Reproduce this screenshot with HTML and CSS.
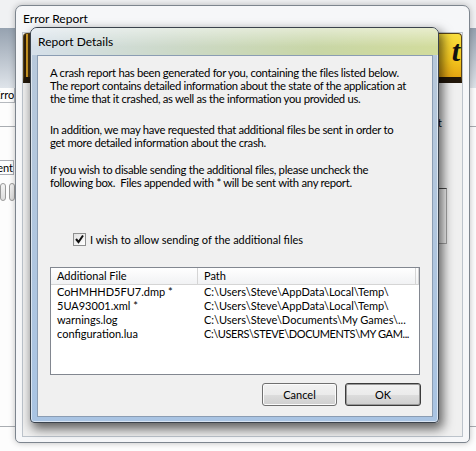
FILE: index.html
```html
<!DOCTYPE html>
<html lang="en">
<head>
  <meta charset="UTF-8" />
  <title>Report Details</title>
  <link rel="stylesheet" href="styles.css">
</head>
<body>
  <!-- window lying behind the error report -->
  <div class="back-win">
    <div class="back-top"></div>
    <div class="back-band"></div>
    <div class="back-field"><span>Error</span></div>
    <div class="back-rule"></div>
    <div class="back-input"><span>Comment</span></div>
    <div class="back-buttons"><span></span><span></span></div>
    <div class="back-rule low"></div>
  </div>

  <div class="win report-win">
    <div class="win-title">Error Report</div>
    <div class="er-client">
      <div class="banner"><span class="banner-logo">Report</span></div>
      <div class="er-label">Comment</div>
      <div class="er-box"></div>
    </div>
  </div>

  <div class="win dialog">
    <div class="dlg-title">Report Details</div>
    <div class="dlg-client">
      <p class="p1">A crash report has been generated for you, containing the files listed below.<br>
        The report contains detailed information about the state of the application at<br>
        the time that it crashed, as well as the information you provided us.</p>
      <p class="p2">In addition, we may have requested that additional files be sent in order to<br>
        get more detailed information about the crash.</p>
      <p class="p3">If you wish to disable sending the additional files, please uncheck the<br>
        following box.&nbsp; Files appended with * will be sent with any report.</p>

      <label class="check">
        <span class="check-box">
          <svg width="11" height="11" viewBox="0 0 11 11"><polyline points="2,5 4.5,8 9,1.5" fill="none" stroke="#111" stroke-width="2"/></svg>
        </span>
        I wish to allow sending of the additional files
      </label>

      <div class="listview">
        <div class="lv-head">
          <span class="c1">Additional File</span>
          <span class="c2">Path</span>
          <span class="c3"></span>
        </div>
        <div class="lv-row"><span class="c1">CoHMHHD5FU7.dmp *</span><span class="c2">C:\Users\Steve\AppData\Local\Temp\</span></div>
        <div class="lv-row"><span class="c1">5UA93001.xml *</span><span class="c2">C:\Users\Steve\AppData\Local\Temp\</span></div>
        <div class="lv-row"><span class="c1">warnings.log</span><span class="c2">C:\Users\Steve\Documents\My Games\...</span></div>
        <div class="lv-row"><span class="c1">configuration.lua</span><span class="c2 caps">C:\USERS\STEVE\DOCUMENTS\MY GAM...</span></div>
      </div>

      <div class="buttons">
        <button class="btn">Cancel</button>
        <button class="btn default">OK</button>
      </div>
    </div>
  </div>
</body>
</html>
```

FILE: styles.css
```css
* {
  box-sizing: border-box;
  margin: 0;
  padding: 0;
}

body {
  width: 476px;
  height: 451px;
  overflow: hidden;
  position: relative;
  background: #f1f2f4;
  font-family: 'Segoe UI', Lato, sans-serif;
  font-size: 11.5px;
  color: #000;
}

/* ---- back window ---- */
.back-win {
  height: 451px;
  display: flex;
  flex-direction: column;
  background: #fdfdfd;
}

.back-top {
  height: 28px;
  background: #f0f1f3;
}

.back-band {
  height: 60px;
  background: linear-gradient(#96a2b0, #dfe4ea);
}

.back-field {
  height: 15px;
  width: 15px;
  overflow: hidden;
  border-bottom: 1px solid #b5b9be;
  border-right: 1px solid #b5b9be;
  line-height: 14px;
  font-size: 11px;
}

.back-field span {
  margin-left: -6px;
}

.back-rule {
  height: 1px;
  margin-top: 23px;
  background: #a9adb2;
}

.back-input {
  width: 14px;
  height: 15px;
  margin-top: 33px;
  overflow: hidden;
  display: flex;
  justify-content: flex-end;
  border: 1px solid #abadb3;
  border-left: 0;
  line-height: 13px;
  font-size: 11px;
}

.back-buttons {
  display: flex;
  gap: 3px;
  margin-top: 8px;
}

.back-buttons span {
  width: 6px;
  height: 18px;
  border: 1px solid #9a9a9a;
  border-radius: 3px;
  background: linear-gradient(#f4f4f4, #dcdcdc);
}

.back-rule.low {
  margin-top: 225px;
}

/* ---- shared window frame ---- */
.win {
  position: absolute;
  display: flex;
  flex-direction: column;
}

.report-win {
  left: 15px;
  top: 5px;
  width: 455px;
  height: 438px;
  border: 1px solid #7d858e;
  border-radius: 7px 7px 5px 5px;
  background: #f6f7f9;
  box-shadow: 0 0 6px rgba(0, 0, 0, 0.25);
}

.win-title {
  height: 26px;
  padding-left: 7px;
  line-height: 26px;
  font-size: 12px;
}

.er-client {
  flex: 1;
  margin: 0 6px 5px;
  border: 1px solid #bcc3cb;
  background: #f0f0f0;
  display: flex;
  flex-direction: column;
}

.banner {
  height: 50px;
  display: flex;
  align-items: flex-start;
  justify-content: flex-end;
  padding: 5px 1px 0 0;
  border: 1px solid #5a4418;
  border-bottom: 6px solid #22170a;
  border-radius: 4px 4px 0 0;
  background:
    linear-gradient(90deg, #2f1f0b 0 2px, #d8a127 2px 4px, #4a3312 4px 7px, transparent 7px),
    linear-gradient(#f9de3e, #f3c61e 60%, #e4a512);
}

.banner-logo {
  font-family: 'Liberation Serif', serif;
  font-style: italic;
  font-weight: bold;
  font-size: 30px;
  line-height: 24px;
  letter-spacing: 16px;
  margin-right: -16px;
  color: #111;
}

.er-label {
  align-self: flex-end;
  margin: 33px 20px 0 0;
  line-height: 13px;
}

.er-box {
  align-self: flex-end;
  width: 300px;
  height: 56px;
  margin: 59px 15px 0 0;
  border: 1px solid #a6a6a6;
  border-top-color: #4a4a4a;
  background: #f7f7f7;
}

/* ---- report details dialog ---- */
.dialog {
  left: 30px;
  top: 27px;
  width: 409px;
  height: 396px;
  border: 1px solid #3a424c;
  border-radius: 7px 7px 4px 4px;
  background: linear-gradient(#b9c9da, #a9c4e3);
  box-shadow: inset 0 0 0 1px rgba(255, 255, 255, 0.55), 3px 5px 11px 1px rgba(0, 0, 0, 0.6);
}

.dlg-title {
  height: 27px;
  padding-left: 7px;
  line-height: 27px;
  font-size: 12px;
  border-radius: 6px 6px 0 0;
  background:
    linear-gradient(rgba(255, 255, 255, 0.5), rgba(255, 255, 255, 0) 70%),
    linear-gradient(90deg, #d6e0ea, #ccd9c8 35%, #c8d6a6 70%, #d2dc9c);
}

.dlg-client {
  width: 396px;
  height: 362px;
  margin-left: 6px;
  border: 1px solid #8b9db3;
  background: #f0f0f0;
  padding: 10px 11px 0 12px;
  display: flex;
  flex-direction: column;
}

.dlg-client p {
  font-size: 11.3px;
  letter-spacing: -0.3px;
  line-height: 13px;
  white-space: nowrap;
}

.p2 {
  margin-top: 18px;
}

.p3 {
  margin-top: 14px;
}

.check {
  display: flex;
  align-items: center;
  gap: 4px;
  height: 13px;
  margin: 44px 0 0 23px;
  font-size: 11px;
}

.check-box {
  width: 13px;
  height: 13px;
  border: 1px solid #8e8f8f;
  background: linear-gradient(135deg, #e2e2e2, #ffffff);
  display: flex;
  align-items: center;
  justify-content: center;
}

.listview {
  width: 370px;
  height: 108px;
  margin-top: 21px;
  border: 1px solid #828790;
  background: #fff;
  font-size: 11px;
}

.lv-head {
  display: flex;
  height: 17px;
  border-bottom: 1px solid #d5d5d5;
  background: linear-gradient(#ffffff, #f1f2f4);
  line-height: 16px;
}

.lv-head span {
  border-right: 1px solid #d5d5d5;
}

.lv-row {
  display: flex;
  height: 14px;
  line-height: 14px;
}

.c1,
.c2 {
  padding-left: 6px;
  white-space: nowrap;
  overflow: hidden;
}

.c1 {
  width: 147px;
}

.c2 {
  width: 218px;
}

.c2.caps {
  letter-spacing: -0.4px;
}

.c3 {
  flex: 1;
}

.buttons {
  display: flex;
  justify-content: flex-end;
  gap: 8px;
  margin-top: 8px;
}

.btn {
  width: 75px;
  height: 23px;
  border: 1px solid #707070;
  border-radius: 3px;
  background: linear-gradient(#f2f2f2, #ebebeb 50%, #dddddd 51%, #cfcfcf);
  box-shadow: inset 0 0 0 1px #fbfbfb;
  font-family: inherit;
  font-size: 11px;
  color: #000;
}

.btn.default {
  width: 76px;
  border-color: #3c3c3c;
  box-shadow: inset 0 0 0 1px #9a9a9a;
}
```
